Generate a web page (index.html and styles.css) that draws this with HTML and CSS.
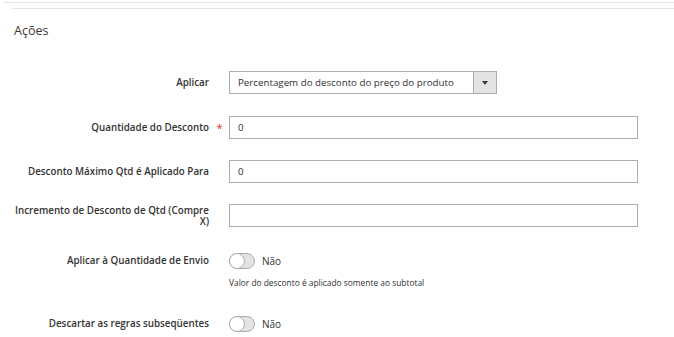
FILE: index.html
```html
<!DOCTYPE html>
<html lang="pt-br">
<head>
    <meta charset="UTF-8">
    <meta name="viewport" content="width=device-width, initial-scale=1.0">
    <title>Ações | Regra de Carrinho</title>
    <link rel="stylesheet" href="styles.css">
</head>
<body>
    <div class="divisor-topo"></div>

    <section class="secao-acoes">
        <h2 class="secao-titulo">Ações</h2>

        <form class="form-acoes" onsubmit="return false;">
            <div class="campo">
                <label class="campo-label" for="aplicar">Aplicar</label>
                <span class="campo-obrigatorio"></span>
                <div class="campo-controle">
                    <div class="select-wrapper">
                        <span class="select-valor" id="aplicar">Percentagem do desconto do preço do produto</span>
                        <span class="select-seta"></span>
                    </div>
                </div>
            </div>

            <div class="campo campo-segundo">
                <label class="campo-label" for="qtdDesconto">Quantidade do Desconto</label>
                <span class="campo-obrigatorio">*</span>
                <div class="campo-controle">
                    <input class="input-texto" id="qtdDesconto" type="text" value="0">
                </div>
            </div>

            <div class="campo">
                <label class="campo-label" for="descontoMaximo">Desconto Máximo Qtd é Aplicado Para</label>
                <span class="campo-obrigatorio"></span>
                <div class="campo-controle">
                    <input class="input-texto" id="descontoMaximo" type="text" value="0">
                </div>
            </div>

            <div class="campo">
                <label class="campo-label" for="incremento">Incremento de Desconto de Qtd (Compre X)</label>
                <span class="campo-obrigatorio"></span>
                <div class="campo-controle">
                    <input class="input-texto" id="incremento" type="text" value="">
                </div>
            </div>

            <div class="campo campo-toggle">
                <label class="campo-label">Aplicar à Quantidade de Envio</label>
                <span class="campo-obrigatorio"></span>
                <div class="campo-controle">
                    <div class="toggle-linha">
                        <span class="toggle"><span class="toggle-bola"></span></span>
                        <span class="toggle-texto">Não</span>
                    </div>
                    <div class="campo-nota">Valor do desconto é aplicado somente ao subtotal</div>
                </div>
            </div>

            <div class="campo campo-toggle campo-ultimo">
                <label class="campo-label">Descartar as regras subseqüentes</label>
                <span class="campo-obrigatorio"></span>
                <div class="campo-controle">
                    <div class="toggle-linha">
                        <span class="toggle"><span class="toggle-bola"></span></span>
                        <span class="toggle-texto">Não</span>
                    </div>
                </div>
            </div>
        </form>
    </section>
</body>
</html>
```

FILE: styles.css
```css
:root {
    --cor-texto: #303030;
    --cor-borda: #adadad;
    --cor-linha: #e3e3e3;
    --cor-cinza: #e3e3e3;
    --cor-obrigatorio: #e22626;
}
* { box-sizing: border-box; margin: 0; padding: 0; }
body {
    font-family: 'Open Sans', 'Noto Sans', Arial, sans-serif;
    color: var(--cor-texto);
    background-color: #ffffff;
}
.divisor-topo { border-top: 1px solid var(--cor-linha); margin: 2px 0 0 3px; }
.secao-acoes { border-top: 1px solid var(--cor-linha); margin: 5px 0 0 12px; }
.secao-titulo {
    font-size: 12.5px; font-weight: 400; line-height: 17px;
    margin: 13px 0 0 2px; color: #41362f;
}
.form-acoes { display: flex; flex-direction: column; margin-top: 32px; }
.campo {
    display: grid; grid-template-columns: 197px 20px 1fr;
    align-items: center; margin-bottom: 21px;
}
.campo-segundo { margin-top: 1px; }
.campo-label {
    font-size: 9.8px; font-weight: 600; line-height: 11px;
    text-align: right; color: #333333;
}
.campo-obrigatorio {
    color: var(--cor-obrigatorio); font-size: 11px; line-height: 11px;
    text-align: center; padding-left: 1px;
}
.campo-controle { display: flex; flex-direction: column; }
.input-texto {
    display: block; width: 409px; height: 23px; border: 1px solid var(--cor-borda);
    padding: 0 8px; font-family: 'Open Sans', Arial, sans-serif;
    font-size: 9.75px; color: var(--cor-texto); outline: none;
}
.select-wrapper {
    display: flex; width: 268px; height: 23px; border: 1px solid var(--cor-borda);
}
.select-valor { flex: 1; font-size: 9.75px; line-height: 21px; padding-left: 8px; }
.select-seta {
    width: 23px; background-color: var(--cor-cinza);
    border-left: 1px solid var(--cor-borda); position: relative;
}
.select-seta::after {
    content: ''; position: absolute; left: 8px; top: 9px;
    border-left: 3px solid transparent; border-right: 3px solid transparent;
    border-top: 4px solid #41362f;
}
.campo-toggle { align-items: start; margin-top: 5px; margin-bottom: 0; }
.campo-toggle .campo-label { padding-top: 2px; }
.campo-ultimo { margin-top: 27px; }
.toggle-linha { display: flex; align-items: center; gap: 7px; height: 16px; }
.toggle {
    width: 26px; height: 16px; border-radius: 8px; background-color: var(--cor-cinza);
    border: 1px solid var(--cor-borda); position: relative;
}
.toggle-bola {
    position: absolute; left: -1px; top: -1px; width: 16px; height: 16px;
    border-radius: 50%; background-color: #ffffff; border: 1px solid var(--cor-borda);
}
.toggle-texto { font-size: 10px; line-height: 16px; color: var(--cor-texto); }
.campo-nota { font-size: 8.4px; line-height: 12px; margin-top: 8px; }
```
